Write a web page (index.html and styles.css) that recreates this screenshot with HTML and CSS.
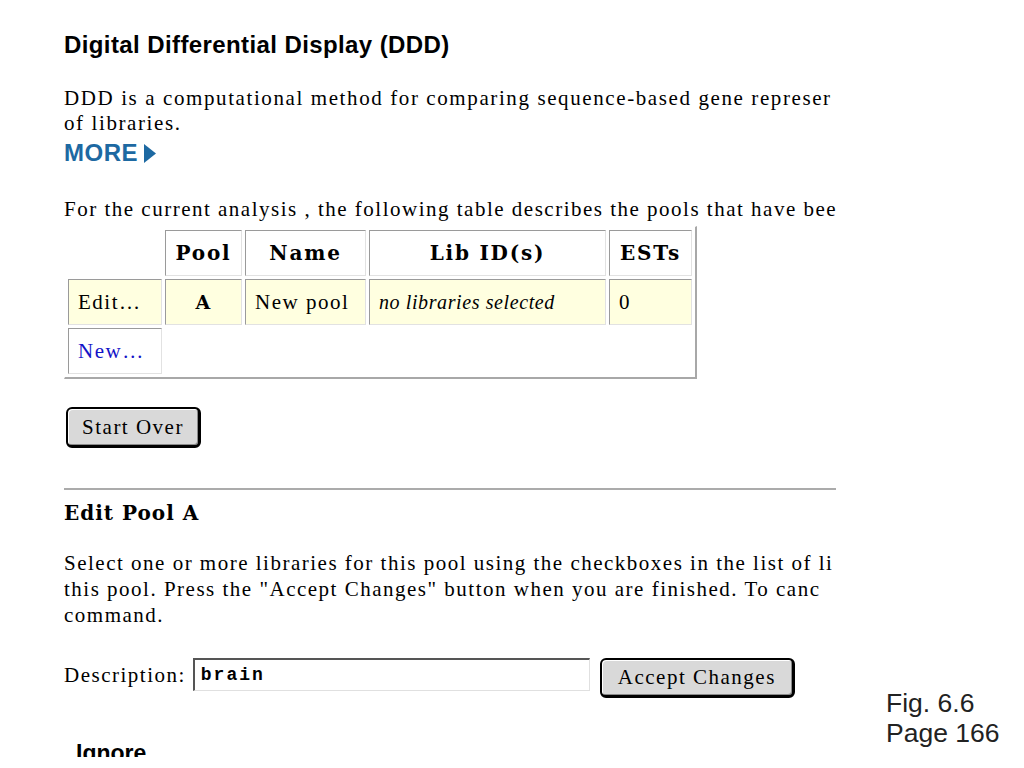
FILE: index.html
```html
<!DOCTYPE html>
<html lang="en">
<head>
    <meta charset="UTF-8">
    <meta name="viewport" content="width=device-width, initial-scale=1.0">
    <title>Digital Differential Display (DDD)</title>
    <link rel="stylesheet" href="styles.css">
</head>
<body>
    <div class="page">
        <!-- Browser frame, text runs off its right edge -->
        <div class="frame">
            <h1 class="title">Digital Differential Display (DDD)</h1>
            <p class="text intro">DDD is a computational method for comparing sequence-based gene represer<br>of libraries.</p>
            <a href="#" class="more">MORE<svg class="more-arrow" width="12" height="19" viewBox="0 0 12 19"><polygon points="0,0 12,9.5 0,19" fill="#1d69a2"/></svg></a>

            <p class="text lead">For the current analysis , the following table describes the pools that have bee</p>
            <table class="pools">
                <tr class="head">
                    <td class="blank col-action"></td>
                    <td class="col-pool">Pool</td>
                    <td class="col-name">Name</td>
                    <td class="col-lib">Lib ID(s)</td>
                    <td class="col-ests">ESTs</td>
                </tr>
                <tr class="pool-row">
                    <td>Edit…</td>
                    <td class="pool-id">A</td>
                    <td>New pool</td>
                    <td class="none">no libraries selected</td>
                    <td>0</td>
                </tr>
                <tr>
                    <td class="new-cell"><a href="#" class="new-link">New…</a></td>
                </tr>
            </table>

            <button type="button" class="btn btn-start">Start Over</button>

            <hr class="divider">

            <h2 class="section-title">Edit Pool A</h2>
            <p class="text help">Select one or more libraries for this pool using the checkboxes in the list of li<br>this pool. Press the "Accept Changes" button when you are finished. To canc<br>command.</p>

            <div class="desc-row">
                <label for="description" class="text desc-label">Description:</label>
                <input type="text" id="description" class="desc-input" value="brain">
                <button type="button" class="btn btn-accept">Accept Changes</button>
            </div>

            <div class="ignore">Ignore</div>
        </div>

        <div class="caption">Fig. 6.6<br>Page 166</div>
    </div>
</body>
</html>
```

FILE: styles.css
```css
/* Base styles */
body {
    margin: 0;
    background-color: #fff;
    color: #000;
    overflow: hidden;
}

.page {
    display: flex;
    align-items: flex-start;
    height: 768px;
}

.frame {
    flex-shrink: 0;
    box-sizing: border-box;
    width: 772px;
    height: 757px;
    margin-left: 64px;
    padding-top: 31px;
    overflow: hidden;
    white-space: nowrap;
}

.text {
    font-family: "Liberation Serif", serif;
    font-size: 21px;
    line-height: 25px;
    letter-spacing: 1.5px;
    margin: 0;
}

/* Header */
.title {
    font-family: "Liberation Sans", Arial, sans-serif;
    font-size: 24px;
    line-height: 28px;
    letter-spacing: 0.4px;
    font-weight: bold;
    margin: 0;
}

.intro {
    margin-top: 27px;
    letter-spacing: 1.6px;
}

.more {
    display: flex;
    align-items: center;
    gap: 6px;
    margin-top: 3px;
    height: 28px;
    font-family: "Liberation Sans", Arial, sans-serif;
    font-size: 24px;
    font-weight: bold;
    color: #1d69a2;
    text-decoration: none;
    letter-spacing: 0.5px;
}

.lead {
    margin-top: 30px;
}

/* Pool table */
.pools {
    margin-top: 4px;
    border-collapse: separate;
    border-spacing: 3px;
    border-style: solid;
    border-width: 1px 2px 2px 1px;
    border-color: #fff #a8a8a8 #a8a8a8 #fff;
    font-family: "Liberation Serif", serif;
    font-size: 21px;
    letter-spacing: 1.5px;
}

.pools tr {
    height: 46px;
}

.pools td {
    padding: 0 9px;
    border: 1px solid;
    border-color: #9a9a9a #e2e2e2 #e2e2e2 #9a9a9a;
    vertical-align: middle;
}

.pools .head td {
    font-family: "DejaVu Serif", serif;
    font-weight: bold;
    font-size: 20px;
    letter-spacing: 1.8px;
    text-align: center;
}

.pools td.blank {
    border: none;
}

.col-action { width: 76px; }
.col-pool { width: 57px; }
.col-name { width: 101px; }
.col-lib { width: 217px; }
.col-ests { width: 63px; }

.pool-row td {
    background-color: #ffffe0;
}

.pools .pool-id {
    font-family: "DejaVu Serif", serif;
    font-weight: bold;
    font-size: 19px;
    text-align: center;
}

.pools .none {
    font-style: italic;
    font-size: 20px;
    letter-spacing: 0.6px;
}

.new-link {
    color: #1414c8;
    text-decoration: none;
}

/* Buttons */
.btn {
    display: block;
    font-family: "Liberation Serif", serif;
    font-size: 21px;
    letter-spacing: 1.5px;
    color: #000;
    background-color: #d9d9d9;
    border-style: solid;
    border-color: #000;
    border-width: 2px 3px 3px 2px;
    border-radius: 6px;
    box-shadow: inset 1px 1px 0 #fff, inset -1px -1px 0 #8a8a8a;
    padding: 0;
    cursor: pointer;
}

.btn-start {
    margin-top: 28px;
    margin-left: 2px;
    width: 135px;
    height: 41px;
}

.divider {
    margin: 40px 0 0;
    border: none;
    border-top: 2px solid #ababab;
    height: 0;
}

/* Edit pool section */
.section-title {
    font-family: "DejaVu Serif", serif;
    font-size: 20px;
    line-height: 25px;
    letter-spacing: 1px;
    font-weight: bold;
    margin: 11px 0 0;
}

.help {
    margin-top: 24px;
    line-height: 26px;
    letter-spacing: 1.5px;
}

.desc-row {
    display: flex;
    align-items: flex-start;
    margin-top: 30px;
}

.desc-label {
    padding-top: 5px;
}

.desc-input {
    box-sizing: border-box;
    width: 397px;
    height: 33px;
    margin: 0 0 0 7px;
    padding: 0 6px;
    font-family: "Liberation Mono", monospace;
    font-size: 18px;
    font-weight: bold;
    letter-spacing: 2px;
    border-style: solid;
    border-width: 2px 1px 1px 2px;
    border-color: #555 #e0e0e0 #e0e0e0 #555;
    background-color: #fff;
}

.btn-accept {
    margin-left: 10px;
    width: 195px;
    height: 40px;
}

.ignore {
    margin-top: 42px;
    padding-left: 12px;
    font-family: "Liberation Sans", Arial, sans-serif;
    font-size: 23px;
    font-weight: bold;
}

/* Figure caption */
.caption {
    align-self: flex-end;
    margin: 0 0 20px 50px;
    font-family: "Liberation Sans", Arial, sans-serif;
    font-size: 26.5px;
    line-height: 30px;
    color: #222;
}
```
